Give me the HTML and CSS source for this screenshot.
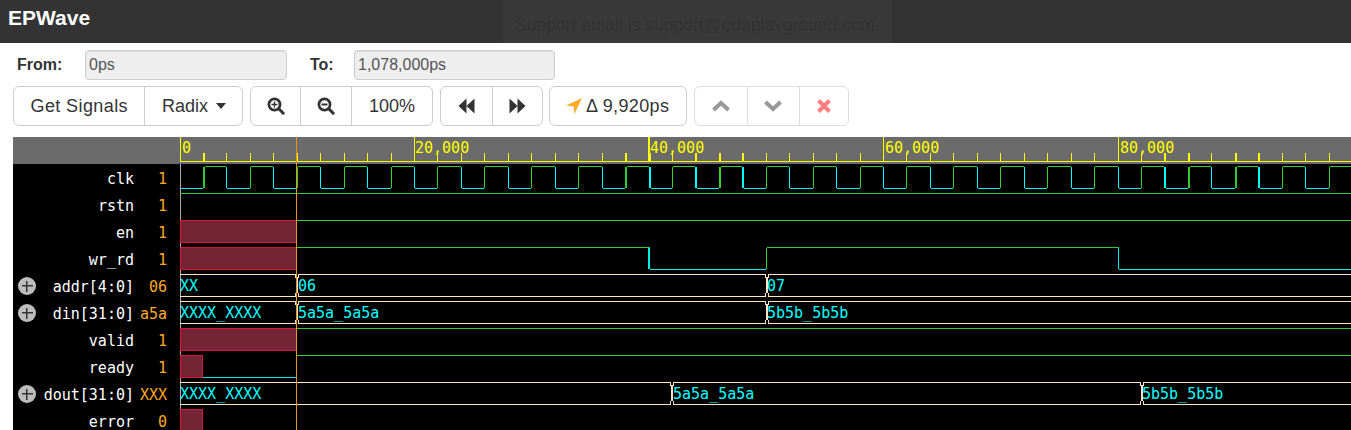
FILE: index.html
```html
<!DOCTYPE html>
<html>
<head>
    <meta charset="utf-8">
    <title>EPWave</title>
    <link rel="stylesheet" href="styles.css">
</head>
<body>
    <div class="navbar">
        <span class="brand">EPWave</span>
    </div>
    <div class="alert">Support email is support@edaplayground.com.</div>

    <div class="range">
        <label class="range-label from">From:</label>
        <input class="range-input" type="text" value="0ps" disabled>
        <label class="range-label to">To:</label>
        <input class="range-input range-input-to" type="text" value="1,078,000ps" disabled>
    </div>

    <div class="toolbar">
        <div class="btn-group">
            <button class="btn btn-signals">Get Signals</button>
            <button class="btn">Radix<span class="caret"></span></button>
        </div>
        <div class="btn-group">
            <button class="btn btn-icon btn-first">
                <svg width="18" height="18" viewBox="0 0 18 18"><circle cx="7.5" cy="7.5" r="5.6" fill="none" stroke="#333" stroke-width="2.7"/><path d="M11.8 11.8L16.2 16.2" stroke="#333" stroke-width="3" stroke-linecap="round"/><path d="M4.5 7.5h6M7.5 4.5v6" stroke="#333" stroke-width="1.4"/></svg>
            </button>
            <button class="btn btn-icon">
                <svg width="18" height="18" viewBox="0 0 18 18"><circle cx="7.5" cy="7.5" r="5.6" fill="none" stroke="#333" stroke-width="2.7"/><path d="M11.8 11.8L16.2 16.2" stroke="#333" stroke-width="3" stroke-linecap="round"/><path d="M4.5 7.5h6" stroke="#333" stroke-width="2"/></svg>
            </button>
            <button class="btn">100%</button>
        </div>
        <div class="btn-group">
            <button class="btn btn-icon">
                <svg width="17" height="16" viewBox="0 0 17 16"><path d="M8.5 0.5L0.5 8l8 7.5zM16.5 0.5L8.5 8l8 7.5z" fill="#333"/></svg>
            </button>
            <button class="btn btn-icon btn-second">
                <svg width="17" height="16" viewBox="0 0 17 16"><path d="M0.5 0.5L8.5 8l-8 7.5zM8.5 0.5L16.5 8l-8 7.5z" fill="#333"/></svg>
            </button>
        </div>
        <div class="btn-group btn-group-delta">
            <button class="btn btn-delta">
                <svg class="arrow" width="16" height="16" viewBox="0 0 16 16"><path d="M16 0L0 7.5l7.5 1 1 7.5z" fill="#fbac2c"/></svg>Δ 9,920ps
            </button>
        </div>
        <div class="btn-group disabled">
            <button class="btn btn-icon btn-wide">
                <svg width="18" height="12" viewBox="0 0 18 12"><path d="M1.5 10L9 3l7.5 7" fill="none" stroke="#626262" stroke-width="4"/></svg>
            </button>
            <button class="btn btn-icon btn-wide">
                <svg width="18" height="12" viewBox="0 0 18 12"><path d="M1.5 2L9 9l7.5-7" fill="none" stroke="#626262" stroke-width="4"/></svg>
            </button>
            <button class="btn btn-icon btn-close">
                <svg width="14" height="14" viewBox="0 0 14 14"><path d="M1.5 1.5l11 11M12.5 1.5l-11 11" fill="none" stroke="#ff3a3a" stroke-width="4"/></svg>
            </button>
        </div>
    </div>

    <div class="viewer">
        <div class="names">
            <div class="names-head"></div>
            <div class="rows">
                <div class="row"><span class="name">clk</span><span class="value">1</span></div>
                <div class="row"><span class="name">rstn</span><span class="value">1</span></div>
                <div class="row"><span class="name">en</span><span class="value">1</span></div>
                <div class="row"><span class="name">wr_rd</span><span class="value">1</span></div>
                <div class="row"><span class="expand"></span><span class="name">addr[4:0]</span><span class="value">06</span></div>
                <div class="row"><span class="expand"></span><span class="name">din[31:0]</span><span class="value">a5a</span></div>
                <div class="row"><span class="name">valid</span><span class="value">1</span></div>
                <div class="row"><span class="name">ready</span><span class="value">1</span></div>
                <div class="row"><span class="expand"></span><span class="name">dout[31:0]</span><span class="value">XXX</span></div>
                <div class="row"><span class="name">error</span><span class="value">0</span></div>
            </div>
        </div>

        <!-- viewBox uses page coordinates so the numbers read off the screenshot directly -->
        <svg id="wave" class="wave" width="1171" height="293" viewBox="180 137 1171 293">
            <rect class="ruler-bg" x="180" y="137" width="1171" height="27"/>
            <g id="ticks"></g>
            <path class="ruler-line" d="M180 161.5H1351"/>
            <text class="ruler-text" x="182" y="153">0</text>
            <text class="ruler-text" x="415" y="153">20,000</text>
            <text class="ruler-text" x="650" y="153">40,000</text>
            <text class="ruler-text" x="885" y="153">60,000</text>
            <text class="ruler-text" x="1120" y="153">80,000</text>

            <path class="origin" d="M180.5 164V430"/>

            <g id="clk"></g>

            <path class="high" d="M179 193.5H1351"/>

            <rect class="unknown" x="180.5" y="220.5" width="116" height="22"/>
            <path class="high" d="M297 220.5H1351"/>

            <rect class="unknown" x="180.5" y="247.5" width="116" height="22"/>
            <path class="high" d="M297 247.5H650M767 247.5H1119M766.5 248V269"/>
            <path class="low" d="M649.5 248V269M648.5 248V269M650 269.5H766M1118.5 248V269M1119 269.5H1351"/>

            <path class="bus" d="M180 274.5H295L296.5 279V291L295 296.5H180M299 274.5H765L766.5 279V291L765 296.5H299L297.5 291V279ZM769 274.5H1351M769 296.5H1351M769 274.5L767.5 279V291L769 296.5"/>
            <text class="bus-text" x="180" y="291">XX</text>
            <text class="bus-text" x="298" y="291">06</text>
            <text class="bus-text" x="767" y="291">07</text>

            <path class="bus" d="M180 301.5H295L296.5 306V318L295 323.5H180M299 301.5H765L766.5 306V318L765 323.5H299L297.5 318V306ZM769 301.5H1351M769 323.5H1351M769 301.5L767.5 306V318L769 323.5"/>
            <text class="bus-text" x="180" y="318">XXXX_XXXX</text>
            <text class="bus-text" x="298" y="318">5a5a_5a5a</text>
            <text class="bus-text" x="767" y="318">5b5b_5b5b</text>

            <rect class="unknown" x="180.5" y="328.5" width="116" height="22"/>
            <path class="high" d="M297 328.5H1351"/>

            <rect class="unknown" x="180.5" y="355.5" width="22" height="22"/>
            <path class="low" d="M203 377.5H297"/>
            <path class="high" d="M297 355.5H1351"/>

            <path class="bus" d="M180 382.5H670L671.5 387V399L670 404.5H180M674 382.5H1140L1141.5 387V399L1140 404.5H674L672.5 399V387ZM1144 382.5H1351M1144 404.5H1351M1144 382.5L1142.5 387V399L1144 404.5"/>
            <text class="bus-text" x="180" y="399">XXXX_XXXX</text>
            <text class="bus-text" x="673" y="399">5a5a_5a5a</text>
            <text class="bus-text" x="1142" y="399">5b5b_5b5b</text>

            <rect class="unknown" x="180.5" y="409.5" width="22" height="22"/>

            <path class="cursor" d="M296.5 137V430"/>
        </svg>
    </div>

    <script src="wave.js"></script>
</body>
</html>
```

FILE: styles.css
```css
body {
    margin: 0;
    background: white;
    color: #333;
    font-family: "Liberation Sans", Arial, sans-serif;
    font-size: 16px;
    overflow: hidden;
}
.navbar {
    height: 43px;
    background: #333;
}
.brand {
    display: block;
    padding: 6px 0 0 8px;
    color: white;
    font-size: 21px;
    font-weight: bold;
    line-height: 24px;
}
.alert {
    position: absolute;
    top: 0;
    left: 503px;
    width: 365px;
    height: 53px;
    padding: 0 12px;
    background: rgba(255, 255, 255, 0.03);
    color: rgba(0, 0, 0, 0.14);
    font-size: 17.5px;
    line-height: 50px;
    white-space: nowrap;
}
.range {
    display: flex;
    align-items: center;
    height: 30px;
    margin: 7px 0 6px 17px;
}
.range-label {
    font-weight: bold;
    color: #333;
}
.range-label.from {
    width: 68px;
}
.range-label.to {
    width: 44px;
    margin-left: 23px;
}
.range-input {
    width: 202px;
    height: 30px;
    box-sizing: border-box;
    padding: 0 3px;
    border: 1px solid #ccc;
    border-radius: 4px;
    background: #eee;
    box-shadow: inset 0 1px 1px rgba(0, 0, 0, 0.075);
    color: #555;
    font: 16px "Liberation Sans", Arial, sans-serif;
}
.range-input-to {
    width: 201px;
}
.toolbar {
    display: flex;
    gap: 7px;
    height: 40px;
    margin-left: 13px;
}
.btn-group {
    display: flex;
    border: 1px solid #ccc;
    border-radius: 6px;
}
.btn-group-delta {
    margin-left: -1px;
}
.btn-group.disabled {
    opacity: 0.65;
}
.btn {
    display: flex;
    align-items: center;
    justify-content: center;
    padding: 0 16.5px;
    border: 0;
    border-left: 1px solid #ccc;
    background: none;
    color: #333;
    font: 18px "Liberation Sans", Arial, sans-serif;
}
.btn:first-child {
    border-left: 0;
}
.btn-signals {
    letter-spacing: 0.4px;
}
.btn-delta {
    letter-spacing: 0.35px;
}
.btn-icon {
    width: 51px;
    padding: 0;
}
.btn-first {
    width: 49px;
}
.btn-second {
    width: 50px;
}
.btn-wide {
    width: 52px;
}
.btn-close {
    width: 49px;
}
.caret {
    width: 0;
    height: 0;
    margin-left: 8px;
    border-top: 6px solid #333;
    border-left: 5.5px solid transparent;
    border-right: 5.5px solid transparent;
}
.arrow {
    margin-right: 4px;
}
.viewer {
    display: flex;
    height: 293px;
    margin: 11px 0 0 13px;
    background: black;
    overflow: hidden;
}
.names {
    width: 167px;
    flex: none;
    font: 15px "DejaVu Sans Mono", monospace;
    color: white;
}
.names-head {
    height: 27px;
    background: #6b6b6b;
}
.rows {
    padding: 2px 13px 0 0;
}
.row {
    position: relative;
    display: flex;
    justify-content: flex-end;
    height: 27px;
    line-height: 27px;
}
.name {
    white-space: nowrap;
}
.value {
    width: 27px;
    margin-left: 6px;
    color: #ffa726;
    text-align: right;
}
.expand {
    position: absolute;
    top: 3px;
    left: 5px;
    width: 18px;
    height: 18px;
    border-radius: 50%;
    background:
        linear-gradient(#333, #333) center / 11px 1.5px no-repeat,
        linear-gradient(#333, #333) center / 1.5px 11px no-repeat,
        #bdbdbd;
}
.wave {
    display: block;
    flex: none;
    shape-rendering: crispEdges;
    fill: none;
}
.ruler-bg {
    fill: #6b6b6b;
}
.ruler-line {
    stroke: #ff0;
}
.tick {
    fill: #ff0;
}
.ruler-text {
    fill: #ff0;
    font: 15px "DejaVu Sans Mono", monospace;
}
.origin {
    stroke: #aaa;
}
.high {
    stroke: #32cd32;
}
.low {
    stroke: #0ee;
}
.edge-high {
    fill: #32cd32;
}
.edge-low {
    fill: #0ff;
}
.unknown {
    fill: #722535;
    stroke: #dc143c;
}
.bus {
    stroke: #ffe4c4;
}
.bus-text {
    fill: #0ff;
    font: 15px "DejaVu Sans Mono", monospace;
}
.cursor {
    stroke: #e8951e;
}
```

FILE: wave.js
```js
const NS = 'http://www.w3.org/2000/svg';
const X0 = 180;
const HALF = 23.45; // 2000ps on screen
const THICK = [1, 19, 20, 22, 23, 24, 42, 43, 45, 46];

function add(parent, tag, attrs) {
    const el = document.createElementNS(NS, tag);
    for (const k in attrs) el.setAttribute(k, attrs[k]);
    parent.appendChild(el);
}

const ticks = document.getElementById('ticks');
const clk = document.getElementById('clk');

// major ticks, every 20,000ps
[[0, 2], [20, 1], [40, 2], [60, 1], [80, 1]].forEach(([k, w]) => {
    add(ticks, 'rect', {class: 'tick', x: Math.floor(X0 + k * 11.725) - w + 1, y: 137, width: w, height: 24});
});

for (let n = 1; n < 50; n++) {
    const x = Math.floor(X0 + n * HALF);
    const w = THICK.includes(n) ? 2 : 1;
    const next = Math.floor(X0 + (n + 1) * HALF);
    const rising = n % 2 === 1;

    add(ticks, 'rect', {class: 'tick', x: x, y: 153, width: w, height: 8});
    add(clk, 'rect', {class: rising ? 'edge-high' : 'edge-low', x: x, y: 167, width: w, height: 21});
    add(clk, 'path', {class: rising ? 'high' : 'low', d: `M${x + w} ${rising ? 166.5 : 188.5}H${next}`});
}
add(clk, 'path', {class: 'low', d: `M${X0} 188.5H${Math.floor(X0 + HALF)}`});
```
